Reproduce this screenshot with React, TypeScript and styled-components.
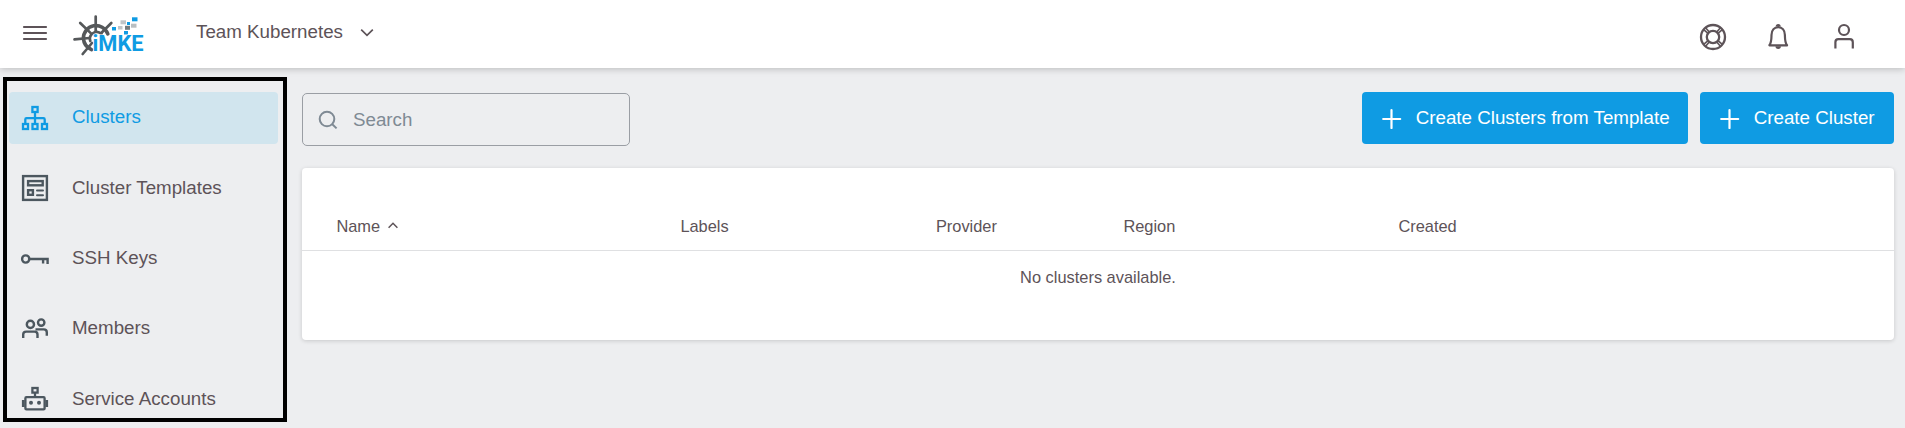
import React from 'react';
import styled, { createGlobalStyle } from 'styled-components';

const GlobalStyle = createGlobalStyle`
  * { box-sizing: border-box; }
  body {
    margin: 0;
    background: #edeef0;
    color: #5d5358;
    font-family: "Liberation Sans", Arial, sans-serif;
    font-size: 18.75px;
    overflow: hidden;
  }
  svg { display: block; flex: none; }
`;

const Page = styled.div`
  height: 428px;
  display: flex;
  flex-direction: column;
`;

const Header = styled.header`
  height: 68px;
  flex: none;
  display: flex;
  align-items: flex-start;
  padding: 0 47px 0 20px;
  background: #fff;
  box-shadow: 0 1px 7px rgba(0, 0, 0, 0.22);
`;

const MenuButton = styled.button`
  width: 30px;
  height: 30px;
  margin: 18px 23px 0 0;
  padding: 0;
  border: 0;
  background: none;
`;

const Logo = styled.div`
  width: 72px;
  margin-top: 14px;
`;

const Project = styled.div`
  display: flex;
  align-items: center;
  gap: 17px;
  height: 24px;
  margin: 20px 0 0 51px;
  line-height: 24px;
`;

const HeaderActions = styled.div`
  display: flex;
  gap: 37.5px;
  margin: 23px 0 0 auto;
`;

const Body = styled.div`
  flex: 1;
  min-height: 0;
  display: flex;
  align-items: flex-start;
  padding: 9px 11px 0 3px;
`;

const Sidebar = styled.nav`
  width: 284px;
  height: 345px;
  flex: none;
  padding: 11px 5px 0 2px;
  border: 4px solid #000;
  overflow: hidden;
`;

const NavItem = styled.a<{ $active?: boolean }>`
  display: flex;
  align-items: center;
  height: 52px;
  margin-bottom: 18.35px;
  padding: 0 0 0 11px;
  gap: 22px;
  border-radius: 4px;
  color: ${(p) => (p.$active ? '#0f9be3' : '#5d5358')};
  background: ${(p) => (p.$active ? '#d1e5ee' : 'transparent')};
  svg { color: ${(p) => (p.$active ? '#0f9be3' : '#4c575f')}; }
`;

const NavLabel = styled.span`
  line-height: 22px;
  padding-bottom: 1.7px;
`;

const Main = styled.main`
  flex: 1;
  margin-left: 15px;
  padding-top: 15px;
`;

const Toolbar = styled.div`
  display: flex;
  align-items: flex-start;
  gap: 12px;
  height: 76px;
`;

const SearchField = styled.label`
  display: flex;
  align-items: center;
  gap: 15.5px;
  width: 328px;
  height: 53px;
  margin: 1px auto 0 0;
  padding-left: 14.5px;
  border: 1px solid #9a9ea4;
  border-radius: 5px;
  color: #7f8a94;
`;

const PrimaryButton = styled.button<{ $width: number }>`
  display: flex;
  align-items: center;
  gap: 13.7px;
  width: ${(p) => p.$width}px;
  height: 52px;
  padding: 0 0 0 19px;
  border: 0;
  border-radius: 4px;
  background: #0f9be3;
  color: #fff;
  font: inherit;
  white-space: nowrap;
`;

const Card = styled.section`
  height: 172px;
  padding-top: 34px;
  border-radius: 4px;
  background: #fff;
  box-shadow: 0 1px 4px rgba(0, 0, 0, 0.16);
  font-size: 16.4px;
`;

const HeadRow = styled.div`
  display: grid;
  grid-template-columns: 344px 255.5px 187.5px 275px 1fr;
  height: 49px;
  padding-left: 34.4px;
  border-bottom: 1px solid #dfe0e2;
  line-height: 48px;
`;

const HeadCell = styled.div`
  display: flex;
  align-items: center;
  gap: 7.5px;
`;

const EmptyRow = styled.div`
  height: 52px;
  line-height: 52px;
  text-align: center;
`;

const MenuIcon = () => (
  <svg width="30" height="30" viewBox="0 0 30 30" stroke="#5d5358" strokeWidth="2.2" strokeLinecap="round">
    <path d="M4 9H26M4 15H26M4 21H26" />
  </svg>
);

const BrandLogo = () => (
  <svg width="72" height="44" viewBox="73 14 72 44">
    <g fill="none" stroke="#55585a" strokeWidth="2.7" strokeLinecap="round">
      <path d="M107.8 33.8A12.6 12.6 0 0 0 83.4 38.5C83.8 43.5 86.5 47.5 91.5 49.6" strokeWidth="3.6" />
      <path d="M101.5 34A6.8 6.8 0 0 0 90.3 41" />
      <path d="M95.7 16.5V31M80.2 23L91 33.4M111.3 23L101 33.2M74.5 39.4L89.5 38M82.7 54L92 43" />
    </g>
    <g fill="#0f9be3">
      <rect x="112" y="27" width="4" height="3.5" />
      <rect x="127" y="22" width="3" height="3" />
      <rect x="132" y="17.3" width="5.5" height="4" />
      <rect x="124" y="31" width="4" height="3.5" />
    </g>
    <rect x="120.5" y="20.3" width="5.5" height="4" fill="#c1c5c8" />
    <rect x="118" y="26" width="4.5" height="3.5" fill="#c1c5c8" />
    <rect x="131" y="23.7" width="5.5" height="4" fill="#b9bec1" />
    <rect x="125" y="25.8" width="5" height="4" fill="#747b7f" />
    <text x="92.6" y="51" textLength="51" lengthAdjust="spacingAndGlyphs" fontFamily="Roboto, sans-serif" fontWeight="700" fontSize="21.5" fill="#0f9be3" stroke="#fff" strokeWidth="1" paintOrder="stroke">iMKE</text>
  </svg>
);

const ChevronDown = () => (
  <svg width="14" height="10" viewBox="0 0 14 10" fill="none" stroke="#5d5358" strokeWidth="1.7">
    <path d="M1.2 2.6L7 8.3L12.8 2.6" />
  </svg>
);

const SortIcon = () => (
  <svg width="10" height="8" viewBox="0 0 10 8" fill="none" stroke="#5d5358" strokeWidth="1.5">
    <path d="M.6 5.8L5 1.3L9.4 5.8" />
  </svg>
);

const HelpIcon = () => (
  <svg width="28" height="28" viewBox="0 0 28 28" fill="none" stroke="#5d5358" strokeWidth="2.3">
    <circle cx="14" cy="14" r="12" />
    <circle cx="14" cy="14" r="6.2" />
    <path d="M5 6.8L9 10.3M6.8 5L10.3 9M23 6.8L19 10.3M21.2 5L17.7 9M5 21.2L9 17.7M6.8 23L10.3 19M23 21.2L19 17.7M21.2 23L17.7 19" strokeWidth="1.6" />
  </svg>
);

const BellIcon = () => (
  <svg width="28" height="28" viewBox="0.8 0 28 28" fill="none" stroke="#5d5358" strokeWidth="2.2">
    <path d="M5.2 22.3C7.4 19.5 7.2 16 7.3 12C7.4 7.3 10.2 4.2 14 4.2S20.6 7.3 20.7 12C20.8 16 20.6 19.5 22.8 22.3Z" strokeLinejoin="round" />
    <path d="M11.5 3.6A2.5 2.5 0 0 1 16.5 3.6ZM11.3 23.2A2.7 2.7 0 0 0 16.7 23.2Z" fill="#5d5358" stroke="none" />
  </svg>
);

const UserIcon = () => (
  <svg width="28" height="28" viewBox="0 0 28 28" fill="none" stroke="#5d5358" strokeWidth="2.2">
    <circle cx="14" cy="7" r="5" />
    <path d="M5.4 25.5V19.2Q5.4 16.2 8.4 16.2H19.8Q22.8 16.2 22.8 19.2V25.5" />
  </svg>
);

const ClustersIcon = () => (
  <svg width="30" height="30" viewBox="0 0 30 30" fill="none" stroke="currentColor" strokeWidth="2.3">
    <rect x="12.4" y="4" width="5.2" height="5" />
    <rect x="3" y="21" width="5" height="5" />
    <rect x="12.5" y="21" width="5" height="5" />
    <rect x="22" y="21" width="5" height="5" />
    <path d="M15 9V21M5.3 21V16.5Q5.3 15.2 6.6 15.2H23.4Q24.7 15.2 24.7 16.5V21" />
  </svg>
);

const TemplatesIcon = () => (
  <svg width="30" height="30" viewBox="0 0 30 30" fill="none" stroke="currentColor" strokeWidth="2.4">
    <rect x="3.1" y="3.1" width="23.8" height="23.8" />
    <rect x="8.1" y="8.1" width="14.6" height="4.2" />
    <rect x="8.1" y="17.2" width="4.8" height="4.6" />
    <path d="M17 17.6H23M17 22.2H23" strokeLinecap="round" strokeWidth="2" />
  </svg>
);

const KeyIcon = () => (
  <svg width="30" height="30" viewBox="0 0 30 30" fill="none" stroke="currentColor" strokeWidth="2.4">
    <circle cx="5.7" cy="15" r="3.6" />
    <path d="M9.5 15H28.8M27.6 15V20M23.1 15V19.5" />
  </svg>
);

const MembersIcon = () => (
  <svg width="30" height="30" viewBox="0 0 30 30" fill="none" stroke="currentColor" strokeWidth="2.4">
    <circle cx="10.4" cy="10.4" r="3.6" />
    <circle cx="21.2" cy="8.6" r="3.2" />
    <path d="M3.2 24V20.6Q3.2 17.6 6.2 17.6H14.5Q17.5 17.6 17.5 20.6V24M15.5 15.4H23.8Q26.8 15.4 26.8 18.4V21.8" />
  </svg>
);

const RobotIcon = () => (
  <svg width="30" height="30" viewBox="0 0 30 30" fill="none" stroke="currentColor" strokeWidth="2.3">
    <rect x="12.4" y="4" width="5.2" height="4.6" />
    <path d="M15 8.5V13" />
    <rect x="5.4" y="13.2" width="19.2" height="12.2" rx="1" />
    <path d="M3.3 16V22.9M26.7 16V22.9" strokeWidth="2.8" />
    <circle cx="11" cy="18.8" r="2" fill="currentColor" stroke="none" />
    <circle cx="19" cy="18.8" r="2" fill="currentColor" stroke="none" />
  </svg>
);

const SearchIcon = () => (
  <svg width="20" height="20" viewBox="0 0 20 20" fill="none" stroke="currentColor" strokeWidth="2">
    <circle cx="9" cy="9" r="7.3" />
    <path d="M14 14L18.6 18.4" />
  </svg>
);

const PlusIcon = () => (
  <svg width="21" height="21" viewBox="0 0 21 21" stroke="#fff" strokeWidth="2.2" strokeLinecap="round">
    <path d="M10.5 2V20M2.2 11H19.2" />
  </svg>
);

const navigation = [
  { label: 'Clusters', Icon: ClustersIcon, active: true },
  { label: 'Cluster Templates', Icon: TemplatesIcon },
  { label: 'SSH Keys', Icon: KeyIcon },
  { label: 'Members', Icon: MembersIcon },
  { label: 'Service Accounts', Icon: RobotIcon },
];

export default function App() {
  return (
    <Page>
      <GlobalStyle />
      <Header>
        <MenuButton aria-label="Menu"><MenuIcon /></MenuButton>
        <Logo><BrandLogo /></Logo>
        <Project>Team Kubernetes <ChevronDown /></Project>
        <HeaderActions>
          <HelpIcon />
          <BellIcon />
          <UserIcon />
        </HeaderActions>
      </Header>
      <Body>
        <Sidebar>
          {navigation.map(({ label, Icon, active }) => (
            <NavItem key={label} $active={active}>
              <Icon />
              <NavLabel>{label}</NavLabel>
            </NavItem>
          ))}
        </Sidebar>
        <Main>
          <Toolbar>
            <SearchField><SearchIcon />Search</SearchField>
            <PrimaryButton $width={326}><PlusIcon />Create Clusters from Template</PrimaryButton>
            <PrimaryButton $width={194}><PlusIcon />Create Cluster</PrimaryButton>
          </Toolbar>
          <Card>
            <HeadRow>
              <HeadCell>Name <SortIcon /></HeadCell>
              <HeadCell>Labels</HeadCell>
              <HeadCell>Provider</HeadCell>
              <HeadCell>Region</HeadCell>
              <HeadCell>Created</HeadCell>
            </HeadRow>
            <EmptyRow>No clusters available.</EmptyRow>
          </Card>
        </Main>
      </Body>
    </Page>
  );
}
